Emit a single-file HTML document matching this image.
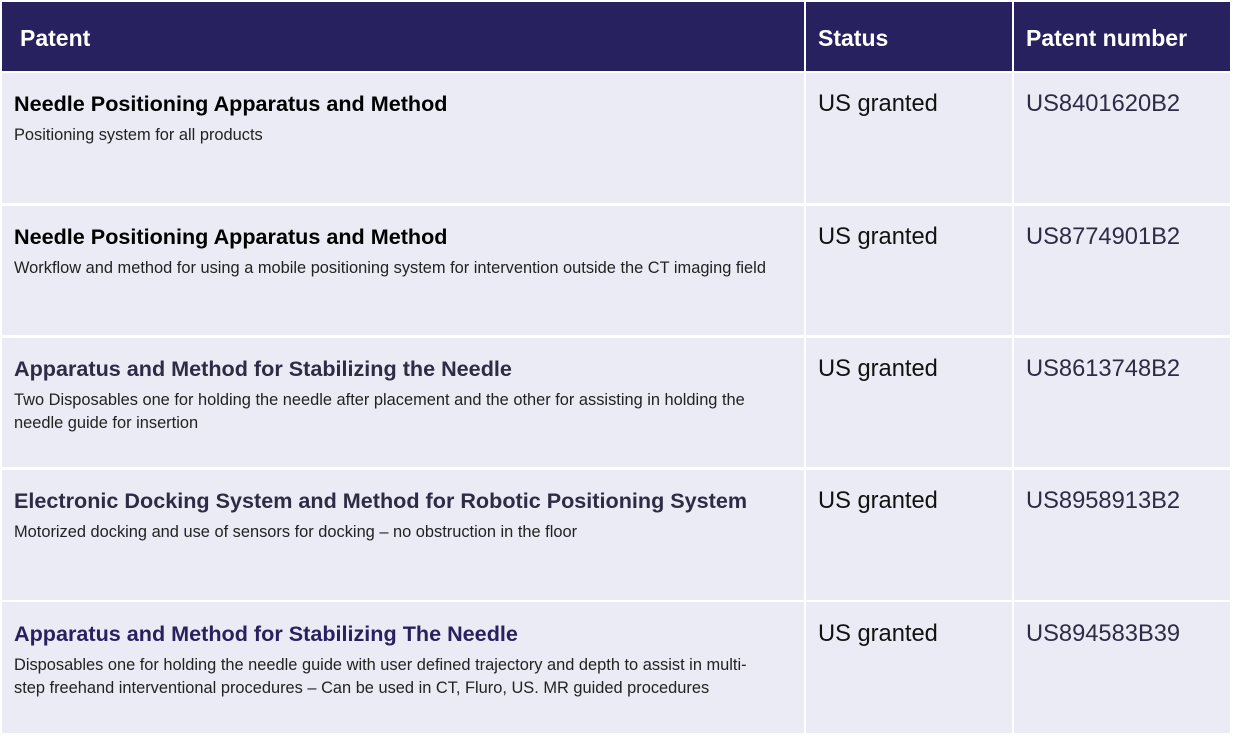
<!DOCTYPE html>
<html><head><style>
body{margin:0;width:1233px;height:736px;background:#fff;position:relative;font-family:"Liberation Sans",sans-serif;overflow:hidden}
.c{position:absolute;background:#ebebf5}
.h{position:absolute;background:#27225f;color:#fff;font-weight:bold;font-size:23px;top:2px;height:69px;line-height:72px;padding-left:18px;box-sizing:border-box}
.t{position:absolute;left:14px;font-weight:bold;font-size:21.6px;white-space:nowrap}
.s{position:absolute;left:14px;font-size:16.4px;line-height:23px;color:#222;white-space:nowrap}
.st{position:absolute;left:818px;font-size:23.7px;color:#111}
.n{position:absolute;left:1026px;font-size:23.7px;color:#2e2b45}
</style></head><body>
<div class="h" style="left:2px;width:802px">Patent</div>
<div class="h" style="left:806px;width:206px;padding-left:12px">Status</div>
<div class="h" style="left:1014px;width:216px;padding-left:12px">Patent number</div>

<div class="c" style="left:2px;top:73px;width:802px;height:130px"></div>
<div class="c" style="left:806px;top:73px;width:206px;height:130px"></div>
<div class="c" style="left:1014px;top:73px;width:216px;height:130px"></div>
<div class="c" style="left:2px;top:206px;width:802px;height:129px"></div>
<div class="c" style="left:806px;top:206px;width:206px;height:129px"></div>
<div class="c" style="left:1014px;top:206px;width:216px;height:129px"></div>
<div class="c" style="left:2px;top:338px;width:802px;height:129px"></div>
<div class="c" style="left:806px;top:338px;width:206px;height:129px"></div>
<div class="c" style="left:1014px;top:338px;width:216px;height:129px"></div>
<div class="c" style="left:2px;top:470px;width:802px;height:130px"></div>
<div class="c" style="left:806px;top:470px;width:206px;height:130px"></div>
<div class="c" style="left:1014px;top:470px;width:216px;height:130px"></div>
<div class="c" style="left:2px;top:602px;width:802px;height:131px"></div>
<div class="c" style="left:806px;top:602px;width:206px;height:131px"></div>
<div class="c" style="left:1014px;top:602px;width:216px;height:131px"></div>

<div class="t" style="top:91px;color:#000">Needle Positioning Apparatus and Method</div>
<div class="s" style="top:124px">Positioning system for all products</div>
<div class="st" style="top:91px">US granted</div><div class="n" style="top:91px">US8401620B2</div>

<div class="t" style="top:224px;color:#000">Needle Positioning Apparatus and Method</div>
<div class="s" style="top:257px">Workflow and method for using a mobile positioning system for intervention outside the CT imaging field</div>
<div class="st" style="top:224px">US granted</div><div class="n" style="top:224px">US8774901B2</div>

<div class="t" style="top:356px;color:#2e2b45">Apparatus and Method for Stabilizing the Needle</div>
<div class="s" style="top:389px">Two Disposables one for holding the needle after placement and the other for assisting in holding the<br>needle guide for insertion</div>
<div class="st" style="top:356px">US granted</div><div class="n" style="top:356px">US8613748B2</div>

<div class="t" style="top:488px;color:#2e2b45">Electronic Docking System and Method for Robotic Positioning System</div>
<div class="s" style="top:521px">Motorized docking and use of sensors for docking – no obstruction in the floor</div>
<div class="st" style="top:488px">US granted</div><div class="n" style="top:488px">US8958913B2</div>

<div class="t" style="top:621px;color:#27225f">Apparatus and Method for Stabilizing The Needle</div>
<div class="s" style="top:654px">Disposables one for holding the needle guide with user defined trajectory and depth to assist in multi-<br>step freehand interventional procedures – Can be used in CT, Fluro, US. MR guided procedures</div>
<div class="st" style="top:621px">US granted</div><div class="n" style="top:621px">US894583B39</div>
</body></html>
